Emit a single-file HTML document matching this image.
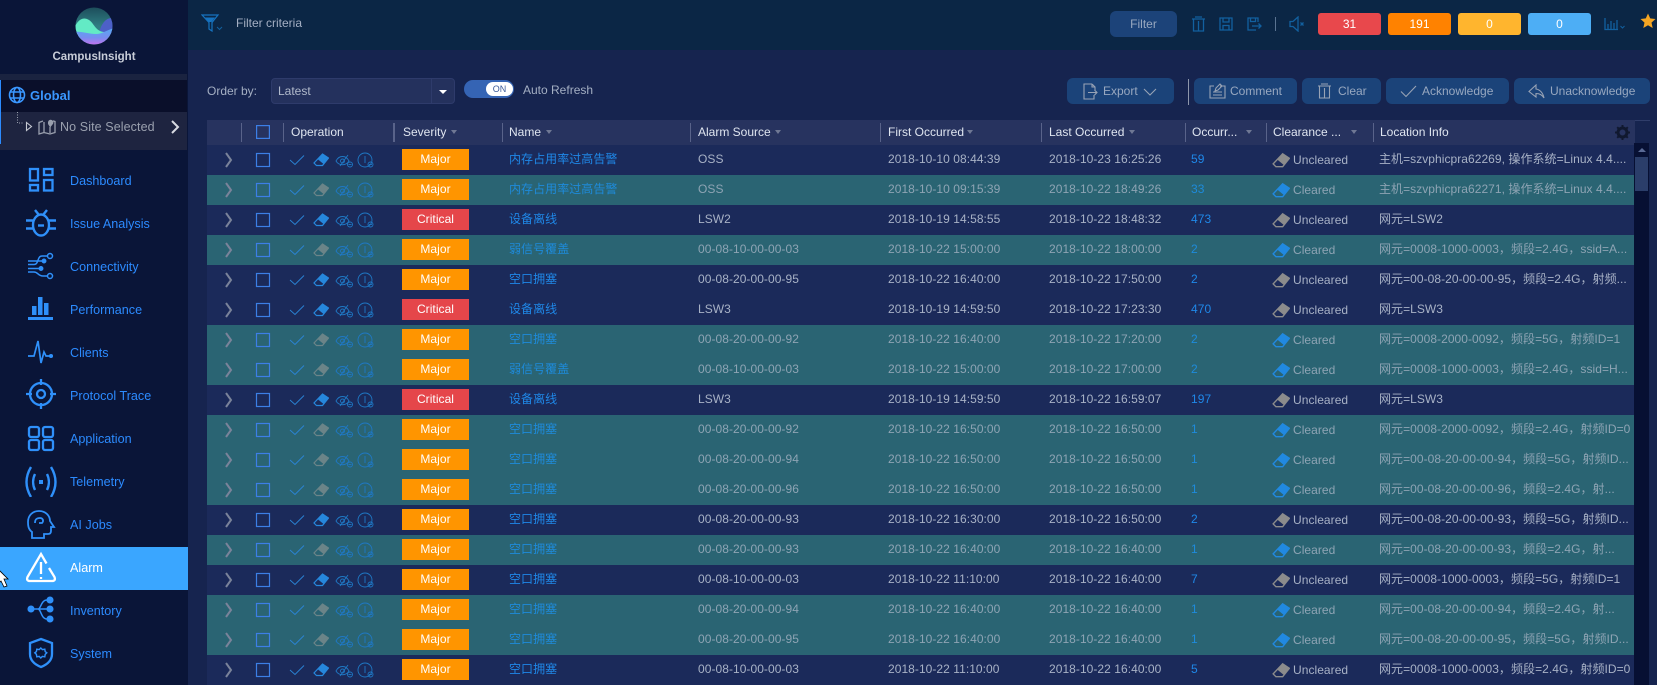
<!DOCTYPE html>
<html><head><meta charset="utf-8"><title>CampusInsight Alarm</title>
<style>
*{box-sizing:border-box}
html,body{margin:0;padding:0;width:1657px;height:685px;overflow:hidden;background:#16244f;font-family:"Liberation Sans","Noto Sans CJK SC",sans-serif;font-size:12px;color:#a8b2c6}
.abs,.abs>*{position:absolute}
#side{left:0;top:0;width:188px;height:685px;background:#0a1538}
#top{left:188px;top:0;width:1469px;height:50px;background:#0b2645}
.nav{position:absolute;left:0;width:188px;height:43px;color:#2c8bff;font-size:12.6px;line-height:43px;padding-left:70px}
.nav svg{position:absolute;left:25px;top:4px;width:32px;height:32px;fill:none;stroke:#2f90fa;stroke-width:2.3}
.nav.on{background:#3aa6ff;color:#fff;font-weight:400}
.nav.on svg{stroke:#fff}
.btn{background:#1b4379;border-radius:6px;height:26px;line-height:26px;color:#98a8c0;top:78px;white-space:nowrap}
.btn svg{position:absolute;fill:none;stroke:#98a3b5;stroke-width:1.1}
.btn span{position:absolute;top:0}
.bd{top:13px;height:22px;line-height:22px;border-radius:3px;color:#fff;text-align:center;font-size:12px}
.ti{fill:none;stroke:#12609f;stroke-width:1.3}
#hdr{left:207px;top:120px;width:1428px;height:25px;background:#27335f;color:#dfe5f0;line-height:25px}
#hdr i{position:absolute;top:3px;width:1px;height:19px;background:#59638a}
#hdr span{position:absolute;top:0;white-space:nowrap}
#hdr u{position:absolute;top:10px;width:0;height:0;border:3.500px solid transparent;border-top:4.500px solid #6f7894;border-bottom:0}
.r{position:absolute;left:207px;width:1428px;height:30px;background:#1b2a5a;color:#a8b2c6;letter-spacing:.05px}
.r.t{background:#2a6473;color:#8ea4b4}
.r>*{position:absolute;top:0;line-height:29px;white-space:nowrap}
.r>svg{left:0;width:180px;height:30px}
.r>b{left:195px;top:4px;width:67px;height:21px;line-height:21px;text-align:center;color:#fff;font-weight:400;background:#ff9500}
.r>b.c{background:#e5464a}
.r>:nth-child(3){left:302px;color:#1f88e8}
.r.t>:nth-child(3){color:#1e8bdb}
.r>:nth-child(4){left:491px}
.r>:nth-child(5){left:681px}
.r>:nth-child(6){left:842px}
.r>:nth-child(7){left:984px;color:#1f88e8}
.r.t>:nth-child(7){color:#1e8bdb}
.r>:nth-child(8){left:1065px;width:120px;line-height:30px;padding-left:21px}
.r>:nth-child(8) svg{position:absolute;left:0;top:7px;width:18px;height:17px}
.r>:nth-child(9){left:1172px;width:253px;overflow:hidden}
</style></head><body>
<svg width="0" height="0" style="position:absolute">
<defs>
<symbol id="er" viewBox="0 0 16 14"><path d="M9.500 1 15.500 5 10.500 11 4.500 6Z" fill="currentColor"/><path d="M9.500 1 15.500 5 9.500 12.500H3.500L1 10Z" fill="none" stroke="currentColor" stroke-width="1.200"/></symbol>
<symbol id="base" viewBox="0 0 180 30">
<path d="M19 8l5 7-5 7" fill="none" stroke="#7a839a" stroke-width="2"/>
<rect x="49.500" y="8.500" width="13" height="13" fill="none" stroke="#3c7fe6" stroke-width="1.200"/>
<path d="M83 15l5 4.500 9-9" fill="none" stroke="#2a84d6" stroke-width=".9"/>
<g fill="none" stroke="#1f78c4" stroke-width=".9"><path d="M129 16c3-6 10-6 13 0-3 5-10 5-13 0zM133 21l8-11"/><circle cx="135.500" cy="16" r="2"/><circle cx="143" cy="19.500" r="2.500"/><path d="M141.500 19.500h3"/><circle cx="158" cy="15" r="7"/><path d="M158 11v7"/><circle cx="163.500" cy="19.500" r="2.500"/><path d="M162 19.500h3"/></g>
</symbol>
</defs></svg>

<div class="abs" style="inset:0">
<div id="side" class="abs">
 <svg style="left:74px;top:6px" width="40" height="40" viewBox="0 0 40 40">
  <defs><linearGradient id="lg" x1="0" y1="0" x2="0" y2="1"><stop offset="0" stop-color="#1c4a58"/><stop offset=".5" stop-color="#2f7d82"/><stop offset="1" stop-color="#3d8a92"/></linearGradient>
  <linearGradient id="lb" x1="0" y1="0" x2="0" y2="1"><stop offset="0" stop-color="#55a8f2"/><stop offset=".55" stop-color="#7a8cf0"/><stop offset="1" stop-color="#d06cec"/></linearGradient>
  <clipPath id="cc"><circle cx="20" cy="20" r="18.500"/></clipPath></defs>
  <g clip-path="url(#cc)"><rect width="40" height="40" fill="url(#lg)"/>
  <path d="M25 27C27 19 31 11 40 12V27Z" fill="#4d60c8"/>
  <path d="M0 22C5 12 10 11 15 14 20 17 21 25 30 26L30 32H0Z" fill="#63eac5"/>
  <path d="M0 26C8 25 14 28 22 28 28 28 33 24 40 22V40H0Z" fill="url(#lb)"/></g>
 </svg>
 <div style="left:0;width:188px;top:49px;text-align:center;color:#c8cdd8;font-size:11.500px;line-height:16px;font-weight:700">CampusInsight</div>
 <div style="left:0;top:74px;width:187px;height:6px;background:#1a2340"></div>
 <div style="left:0;top:80px;width:187px;height:32px;background:#0a0f2a"></div>
 <div style="left:0;top:112px;width:187px;height:38px;background:#1e2440"></div>
 <div style="left:0;top:80px;width:1px;height:64px;background:#2c8bff"></div>
 <svg style="left:8px;top:86px" width="18" height="18" viewBox="0 0 18 18" fill="none" stroke="#3a97ff" stroke-width="1.600"><circle cx="9" cy="9" r="7.500"/><ellipse cx="9" cy="9" rx="3.500" ry="7.500"/><path d="M2 6h14M2 12h14"/></svg>
 <div style="left:30px;top:87px;line-height:18px;color:#3a97ff;font-weight:700;font-size:13px">Global</div>
 <svg style="left:14px;top:112px" width="20" height="20" viewBox="0 0 20 20" fill="none"><path d="M3.500 0V11H9" stroke="#9aa0ae" stroke-dasharray="1 1.500"/><path d="M12.500 10.500l5 4-5 4z" stroke="#c5c8d2" stroke-width="1.100"/></svg>
 <svg style="left:38px;top:118px" width="18" height="18" viewBox="0 0 18 18" fill="none" stroke="#9aa0ae" stroke-width="1.300"><path d="M5 3 1 4.500V16l5-1.500 6 1.500 5-1.500V3.500l-2-.6"/><path d="M6 4v10M12 9v6"/><path d="M10 4.500a2.700 2.700 0 1 1 4.500 2L12.200 9.500 10.300 6.500a2.700 2.700 0 0 1-.3-2z" fill="#9aa0ae" stroke="none"/></svg>
 <div style="left:60px;top:118px;line-height:19px;color:#9aa0ae;font-size:12.500px;letter-spacing:.1px">No Site Selected</div>
 <svg style="left:170px;top:120px" width="10" height="14" viewBox="0 0 10 14" fill="none" stroke="#d8dbe2" stroke-width="2"><path d="M2 1l6 6-6 6"/></svg>

 <div class="nav" style="top:160px"><svg viewBox="0 0 32 32"><rect x="5" y="5" width="8" height="11.500"/><rect x="19" y="5" width="8.500" height="6"/><rect x="5" y="21" width="8" height="5.500"/><rect x="19" y="16" width="8.500" height="10.500"/></svg>Dashboard</div>
 <div class="nav" style="top:203px"><svg viewBox="0 0 32 32" style="stroke-width:2.400"><ellipse cx="16" cy="18" rx="8" ry="10.500"/><path d="M1 13.500H8M24 13.500H31M1 21.500H8M24 21.500H31M10 3l4 5M22 3l-4 5"/><path d="M13 18.500h6"/></svg>Issue Analysis</div>
 <div class="nav" style="top:246px"><svg viewBox="0 0 32 32" style="stroke-width:1.500"><circle cx="25" cy="6" r="2.500"/><circle cx="25" cy="26" r="2.500"/><circle cx="19" cy="11" r="1.700" fill="#2f90fa"/><circle cx="16" cy="18.500" r="1.700" fill="#2f90fa"/><path d="M3 11H19M3 14.500H9C14 14.500 12 6 17 6H22.500M3 18.500H16M3 22H9C13 22 13 26 18 26H22.500"/></svg>Connectivity</div>
 <div class="nav" style="top:289px"><svg viewBox="0 0 32 32" style="stroke:none;fill:#2f90fa"><rect x="7" y="13" width="4.500" height="9"/><rect x="13" y="4" width="4.500" height="18"/><rect x="19" y="10" width="4.500" height="12"/><rect x="3" y="24" width="25" height="3"/></svg>Performance</div>
 <div class="nav" style="top:332px"><svg viewBox="0 0 32 32" style="stroke-width:1.700"><path d="M3 20H9L13 5 16 27 19 16 21 20H26"/><circle cx="26" cy="20" r="1.200" fill="#2f90fa"/></svg>Clients</div>
 <div class="nav" style="top:375px"><svg viewBox="0 0 32 32"><circle cx="16" cy="15" r="11"/><circle cx="16" cy="15" r="4"/><path d="M16 0v6M16 24v6M1 15h6M25 15h6"/></svg>Protocol Trace</div>
 <div class="nav" style="top:418px"><svg viewBox="0 0 32 32"><rect x="4" y="5" width="10" height="10" rx="2"/><rect x="18" y="5" width="10" height="10" rx="2"/><rect x="4" y="18" width="10" height="10" rx="2"/><rect x="18" y="18" width="10" height="10" rx="2"/></svg>Application</div>
 <div class="nav" style="top:461px"><svg viewBox="0 0 32 32" style="stroke-width:2.400"><path d="M6 2C0 12 0 22 6 32M26 2C32 12 32 22 26 32M10 9C7.500 14 7.500 20 10 25M22 9C24.500 14 24.500 20 22 25"/><rect x="14" y="15" width="4" height="4" fill="#2f90fa" stroke="none"/></svg>Telemetry</div>
 <div class="nav" style="top:504px"><svg viewBox="0 0 32 32" style="stroke-width:1.800"><path d="M7 30V24C3 21 3 17 3 14 3 7 8 3 14 3 21 3 25 8 25 13L29 19H26V23Q26 26 23 26H19V30Z"/><path d="M10 15C10 11 12 10 15 10 18 10 19 13 17 15H14"/></svg>AI Jobs</div>
 <div class="nav on" style="top:547px"><svg viewBox="0 0 32 32"><path d="M21.500 12.500 16 3 2.500 26Q1 30 5 30H27Q31 30 29.500 26L24 17"/><path d="M16 11v12M16 26v2"/></svg>Alarm</div>
 <div class="nav" style="top:590px"><svg viewBox="0 0 32 32" style="stroke-width:1.500"><circle cx="6" cy="15" r="2.800" fill="#2f90fa"/><circle cx="25" cy="6" r="2.800" fill="#2f90fa"/><circle cx="25" cy="15" r="2.800" fill="#2f90fa"/><circle cx="25" cy="25" r="2.800" fill="#2f90fa"/><path d="M6 15H25M13 15 C16 15 16 6 22 6M13 15C16 15 16 25 22 25"/></svg>Inventory</div>
 <div class="nav" style="top:633px"><svg viewBox="0 0 32 32"><path d="M16 5 27 9V20C27 27 21 31 16 33 11 31 5 27 5 20V9Z" transform="translate(0 -3)"/><path d="M16 10l2 2 3-.5.500 3 2 1.500-2 2-.500 3-3-.5-2 2-2-2-3 .5-.500-3-2-2 2-1.500.500-3 3 .5z" transform="translate(3 3) scale(.8)" stroke-width="1.800"/></svg>System</div>
 <svg style="left:0;top:569px" width="10" height="21" viewBox="0 0 10 21"><path d="M-1 1 8 10H4L7 17 4 18 1 12-1 14Z" fill="#fff" stroke="#000" stroke-width=".8"/></svg>
</div>

<div id="top"></div>
<svg class="ti" style="left:201px;top:14px" width="24" height="18" viewBox="0 0 24 18"><path d="M1 1H17L11 8.500V17L8 15V8.500Z" stroke-width="1.200" stroke="#1672bf"/><path d="M4 3.500H14L10.500 8H8Z" fill="#1672bf" stroke="none"/><path d="M16 13l2.500 2.500 2.500-2.500" stroke-width="1"/></svg>
<div style="left:236px;top:14px;line-height:18px;color:#a4afc3">Filter criteria</div>
<div class="btn" style="left:1110px;top:11px;width:67px;text-align:center;background:#1c4379">Filter</div>
<svg class="ti" style="left:1191px;top:16px" width="15" height="16" viewBox="0 0 15 16"><path d="M1 3H14M4 1H11M2.500 3V15H12.500V3M7.500 5V15"/></svg>
<svg class="ti" style="left:1219px;top:17px" width="14" height="14" viewBox="0 0 14 14"><path d="M1 1H13V13H1ZM4 1V5H10V1M4 13V8.500H10V13"/></svg>
<svg class="ti" style="left:1247px;top:17px" width="15" height="14" viewBox="0 0 15 14"><path d="M11 5V1H1V13H9M3.500 1V4.500H8.500V1M5 9H14M11.500 6.500 14 9 11.500 11.500"/></svg>
<div style="left:1275px;top:17px;width:1px;height:14px;background:#5a7391"></div>
<svg class="ti" style="left:1289px;top:16px" width="17" height="16" viewBox="0 0 17 16"><path d="M1 5.500H4L9 1V15L4 10.500H1ZM11.500 6.500l3 3M14.500 6.500l-3 3"/></svg>
<div class="bd" style="left:1318px;width:63px;background:#e8484c">31</div>
<div class="bd" style="left:1388px;width:63px;background:#ff8200">191</div>
<div class="bd" style="left:1458px;width:63px;background:#ffb52e">0</div>
<div class="bd" style="left:1528px;width:63px;background:#4daef5">0</div>
<svg class="ti" style="left:1604px;top:17px" width="22" height="14" viewBox="0 0 22 14"><path d="M1 1V12.500H14M4 12V7M7 12V4M10 12V6M13 12V3" stroke-width="1.300"/><path d="M16.500 9l2 2 2-2" stroke-width="1"/></svg>
<svg style="left:1640px;top:13px" width="16" height="16" viewBox="0 0 16 16"><path d="M8 .5 10.200 5.400 15.500 6 11.500 9.600 12.700 15 8 12.200 3.300 15 4.500 9.600.5 6 5.800 5.400Z" fill="#f6a623"/></svg>

<div style="left:207px;top:82px;line-height:18px;color:#a4afc3">Order by:</div>
<div style="left:271px;top:78px;width:184px;height:26px;background:#24315d;border:1px solid #2e3b6b;border-radius:4px"></div>
<div style="left:431px;top:79px;width:1px;height:24px;background:#2e3b6b"></div>
<div style="left:278px;top:82px;line-height:18px;color:#b0b9cb">Latest</div>
<div style="left:439px;top:90px;width:0;height:0;border:4px solid transparent;border-top:4px solid #fff;border-bottom:0"></div>
<div style="left:464px;top:80px;width:50px;height:18px;border-radius:9px;background:#3564b4"></div>
<div style="left:486px;top:82px;width:27px;height:14px;border-radius:7px;background:#fff;color:#3a5a99;font-size:9px;line-height:14px;text-align:center">ON</div>
<div style="left:523px;top:81px;line-height:18px;color:#a4afc3">Auto Refresh</div>

<div class="btn" style="left:1067px;width:107px"><svg style="left:15px;top:5px" width="16" height="17" viewBox="0 0 16 17"><path d="M10 1H2V16H12V12M10 1 13 4V7M10 1V4H13M6 9.500H15M12.500 7 15 9.500 12.500 12"/></svg><span style="left:36px">Export</span><svg style="left:76px;top:10px" width="14" height="8" viewBox="0 0 14 8"><path d="M1 1l6 6 6-6"/></svg></div>
<div style="left:1188px;top:79px;width:1px;height:26px;background:#8d96ab"></div>
<div class="btn" style="left:1194px;width:103px"><svg style="left:15px;top:5px" width="17" height="16" viewBox="0 0 17 16"><path d="M5 3H1V15H16V3H11M4 12H13M4 9H13"/><path d="M6 8 7 5 11 1 13 3 9 7Z"/></svg><span style="left:36px">Comment</span></div>
<div class="btn" style="left:1302px;width:79px"><svg style="left:15px;top:5px" width="15" height="16" viewBox="0 0 15 16"><path d="M1 3H14M4 1H11M2.500 3V15H12.500V3M7.500 5V15"/></svg><span style="left:36px">Clear</span></div>
<div class="btn" style="left:1386px;width:123px"><svg style="left:14px;top:7px" width="17" height="13" viewBox="0 0 17 13"><path d="M1 6.500 6 11.500 16 1"/></svg><span style="left:36px">Acknowledge</span></div>
<div class="btn" style="left:1514px;width:136px"><svg style="left:14px;top:6px" width="17" height="15" viewBox="0 0 17 15"><path d="M8 1 1 7.500 8 13V9.500C12 9.500 14 11 16 14 15 9 12 5.500 8 5Z"/></svg><span style="left:36px">Unacknowledge</span></div>

<div id="hdr">
<i style="left:34px"></i><i style="left:76px"></i><i style="left:186px;width:2px"></i><i style="left:295px"></i><i style="left:483px"></i><i style="left:673px"></i><i style="left:834px"></i><i style="left:978px"></i><i style="left:1059px"></i><i style="left:1166px"></i>
<svg style="position:absolute;left:49px;top:5px" width="14" height="14" viewBox="0 0 14 14"><rect x=".6" y=".6" width="12.800" height="12.800" fill="none" stroke="#3c7fe6" stroke-width="1.200"/></svg>
<span style="left:84px">Operation</span>
<span style="left:196px">Severity</span><u style="left:244px"></u>
<span style="left:302px">Name</span><u style="left:339px"></u>
<span style="left:491px">Alarm Source</span><u style="left:568px"></u>
<span style="left:681px">First Occurred</span><u style="left:760px"></u>
<span style="left:842px">Last Occurred</span><u style="left:922px"></u>
<span style="left:985px">Occurr...</span><u style="left:1039px"></u>
<span style="left:1066px">Clearance ...</span><u style="left:1144px"></u>
<span style="left:1173px">Location Info</span>
<svg style="position:absolute;left:1408px;top:5px" width="15" height="15" viewBox="0 0 15 15"><circle cx="7.500" cy="7.500" r="4.500" fill="none" stroke="#10182f" stroke-width="3"/><path d="M7.500 0v3M7.500 12v3M0 7.500h3M12 7.500h3M2.200 2.200l2 2M10.800 10.800l2 2M2.200 12.800l2-2M10.800 4.200l2-2" stroke="#10182f" stroke-width="2"/></svg>
</div>

<div class="r" style="top:145px"><svg style="color:#2687dc"><use href="#base"/><svg x="106" y="8" width="16" height="14"><use href="#er"/></svg></svg><b>Major</b><span>内存占用率过高告警</span><span>OSS</span><span>2018-10-10 08:44:39</span><span>2018-10-23 16:25:26</span><span>59</span><span style="color:#a8b2c6"><svg style="color:#8c8c8c"><use href="#er"/></svg>Uncleared</span><span>主机=szvphicpra62269, 操作系统=Linux 4.4....</span></div>
<div class="r t" style="top:175px"><svg style="color:#6b8488"><use href="#base"/><svg x="106" y="8" width="16" height="14"><use href="#er"/></svg></svg><b>Major</b><span>内存占用率过高告警</span><span>OSS</span><span>2018-10-10 09:15:39</span><span>2018-10-22 18:49:26</span><span>33</span><span><svg style="color:#2189e0"><use href="#er"/></svg>Cleared</span><span>主机=szvphicpra62271, 操作系统=Linux 4.4....</span></div>
<div class="r" style="top:205px"><svg style="color:#2687dc"><use href="#base"/><svg x="106" y="8" width="16" height="14"><use href="#er"/></svg></svg><b class="c">Critical</b><span>设备离线</span><span>LSW2</span><span>2018-10-19 14:58:55</span><span>2018-10-22 18:48:32</span><span>473</span><span><svg style="color:#8c8c8c"><use href="#er"/></svg>Uncleared</span><span>网元=LSW2</span></div>
<div class="r t" style="top:235px"><svg style="color:#6b8488"><use href="#base"/><svg x="106" y="8" width="16" height="14"><use href="#er"/></svg></svg><b>Major</b><span>弱信号覆盖</span><span>00-08-10-00-00-03</span><span>2018-10-22 15:00:00</span><span>2018-10-22 18:00:00</span><span>2</span><span><svg style="color:#2189e0"><use href="#er"/></svg>Cleared</span><span>网元=0008-1000-0003，频段=2.4G，ssid=A...</span></div>
<div class="r" style="top:265px"><svg style="color:#2687dc"><use href="#base"/><svg x="106" y="8" width="16" height="14"><use href="#er"/></svg></svg><b>Major</b><span>空口拥塞</span><span>00-08-20-00-00-95</span><span>2018-10-22 16:40:00</span><span>2018-10-22 17:50:00</span><span>2</span><span><svg style="color:#8c8c8c"><use href="#er"/></svg>Uncleared</span><span>网元=00-08-20-00-00-95，频段=2.4G，射频...</span></div>
<div class="r" style="top:295px"><svg style="color:#2687dc"><use href="#base"/><svg x="106" y="8" width="16" height="14"><use href="#er"/></svg></svg><b class="c">Critical</b><span>设备离线</span><span>LSW3</span><span>2018-10-19 14:59:50</span><span>2018-10-22 17:23:30</span><span>470</span><span><svg style="color:#8c8c8c"><use href="#er"/></svg>Uncleared</span><span>网元=LSW3</span></div>
<div class="r t" style="top:325px"><svg style="color:#6b8488"><use href="#base"/><svg x="106" y="8" width="16" height="14"><use href="#er"/></svg></svg><b>Major</b><span>空口拥塞</span><span>00-08-20-00-00-92</span><span>2018-10-22 16:40:00</span><span>2018-10-22 17:20:00</span><span>2</span><span><svg style="color:#2189e0"><use href="#er"/></svg>Cleared</span><span>网元=0008-2000-0092，频段=5G，射频ID=1</span></div>
<div class="r t" style="top:355px"><svg style="color:#6b8488"><use href="#base"/><svg x="106" y="8" width="16" height="14"><use href="#er"/></svg></svg><b>Major</b><span>弱信号覆盖</span><span>00-08-10-00-00-03</span><span>2018-10-22 15:00:00</span><span>2018-10-22 17:00:00</span><span>2</span><span><svg style="color:#2189e0"><use href="#er"/></svg>Cleared</span><span>网元=0008-1000-0003，频段=2.4G，ssid=H...</span></div>
<div class="r" style="top:385px"><svg style="color:#2687dc"><use href="#base"/><svg x="106" y="8" width="16" height="14"><use href="#er"/></svg></svg><b class="c">Critical</b><span>设备离线</span><span>LSW3</span><span>2018-10-19 14:59:50</span><span>2018-10-22 16:59:07</span><span>197</span><span><svg style="color:#8c8c8c"><use href="#er"/></svg>Uncleared</span><span>网元=LSW3</span></div>
<div class="r t" style="top:415px"><svg style="color:#6b8488"><use href="#base"/><svg x="106" y="8" width="16" height="14"><use href="#er"/></svg></svg><b>Major</b><span>空口拥塞</span><span>00-08-20-00-00-92</span><span>2018-10-22 16:50:00</span><span>2018-10-22 16:50:00</span><span>1</span><span><svg style="color:#2189e0"><use href="#er"/></svg>Cleared</span><span>网元=0008-2000-0092，频段=2.4G，射频ID=0</span></div>
<div class="r t" style="top:445px"><svg style="color:#6b8488"><use href="#base"/><svg x="106" y="8" width="16" height="14"><use href="#er"/></svg></svg><b>Major</b><span>空口拥塞</span><span>00-08-20-00-00-94</span><span>2018-10-22 16:50:00</span><span>2018-10-22 16:50:00</span><span>1</span><span><svg style="color:#2189e0"><use href="#er"/></svg>Cleared</span><span>网元=00-08-20-00-00-94，频段=5G，射频ID...</span></div>
<div class="r t" style="top:475px"><svg style="color:#6b8488"><use href="#base"/><svg x="106" y="8" width="16" height="14"><use href="#er"/></svg></svg><b>Major</b><span>空口拥塞</span><span>00-08-20-00-00-96</span><span>2018-10-22 16:50:00</span><span>2018-10-22 16:50:00</span><span>1</span><span><svg style="color:#2189e0"><use href="#er"/></svg>Cleared</span><span>网元=00-08-20-00-00-96，频段=2.4G，射...</span></div>
<div class="r" style="top:505px"><svg style="color:#2687dc"><use href="#base"/><svg x="106" y="8" width="16" height="14"><use href="#er"/></svg></svg><b>Major</b><span>空口拥塞</span><span>00-08-20-00-00-93</span><span>2018-10-22 16:30:00</span><span>2018-10-22 16:50:00</span><span>2</span><span><svg style="color:#8c8c8c"><use href="#er"/></svg>Uncleared</span><span>网元=00-08-20-00-00-93，频段=5G，射频ID...</span></div>
<div class="r t" style="top:535px"><svg style="color:#6b8488"><use href="#base"/><svg x="106" y="8" width="16" height="14"><use href="#er"/></svg></svg><b>Major</b><span>空口拥塞</span><span>00-08-20-00-00-93</span><span>2018-10-22 16:40:00</span><span>2018-10-22 16:40:00</span><span>1</span><span><svg style="color:#2189e0"><use href="#er"/></svg>Cleared</span><span>网元=00-08-20-00-00-93，频段=2.4G，射...</span></div>
<div class="r" style="top:565px"><svg style="color:#2687dc"><use href="#base"/><svg x="106" y="8" width="16" height="14"><use href="#er"/></svg></svg><b>Major</b><span>空口拥塞</span><span>00-08-10-00-00-03</span><span>2018-10-22 11:10:00</span><span>2018-10-22 16:40:00</span><span>7</span><span><svg style="color:#8c8c8c"><use href="#er"/></svg>Uncleared</span><span>网元=0008-1000-0003，频段=5G，射频ID=1</span></div>
<div class="r t" style="top:595px"><svg style="color:#6b8488"><use href="#base"/><svg x="106" y="8" width="16" height="14"><use href="#er"/></svg></svg><b>Major</b><span>空口拥塞</span><span>00-08-20-00-00-94</span><span>2018-10-22 16:40:00</span><span>2018-10-22 16:40:00</span><span>1</span><span><svg style="color:#2189e0"><use href="#er"/></svg>Cleared</span><span>网元=00-08-20-00-00-94，频段=2.4G，射...</span></div>
<div class="r t" style="top:625px"><svg style="color:#6b8488"><use href="#base"/><svg x="106" y="8" width="16" height="14"><use href="#er"/></svg></svg><b>Major</b><span>空口拥塞</span><span>00-08-20-00-00-95</span><span>2018-10-22 16:40:00</span><span>2018-10-22 16:40:00</span><span>1</span><span><svg style="color:#2189e0"><use href="#er"/></svg>Cleared</span><span>网元=00-08-20-00-00-95，频段=5G，射频ID...</span></div>
<div class="r" style="top:655px"><svg style="color:#2687dc"><use href="#base"/><svg x="106" y="8" width="16" height="14"><use href="#er"/></svg></svg><b>Major</b><span>空口拥塞</span><span>00-08-10-00-00-03</span><span>2018-10-22 11:10:00</span><span>2018-10-22 16:40:00</span><span>5</span><span><svg style="color:#8c8c8c"><use href="#er"/></svg>Uncleared</span><span>网元=0008-1000-0003，频段=2.4G，射频ID=0</span></div>

<div style="left:1635px;top:120px;width:15px;height:1px;background:#2f3d6a"></div>
<div style="left:1634px;top:143px;width:15px;height:542px;background:#071033"></div>
<div style="left:1635px;top:157px;width:13px;height:34px;background:#2b3e6a"></div>
<div style="left:1638px;top:148px;width:0;height:0;border:4px solid transparent;border-bottom:4px solid #5a6a95;border-top:0"></div>
</div>
</body></html>
